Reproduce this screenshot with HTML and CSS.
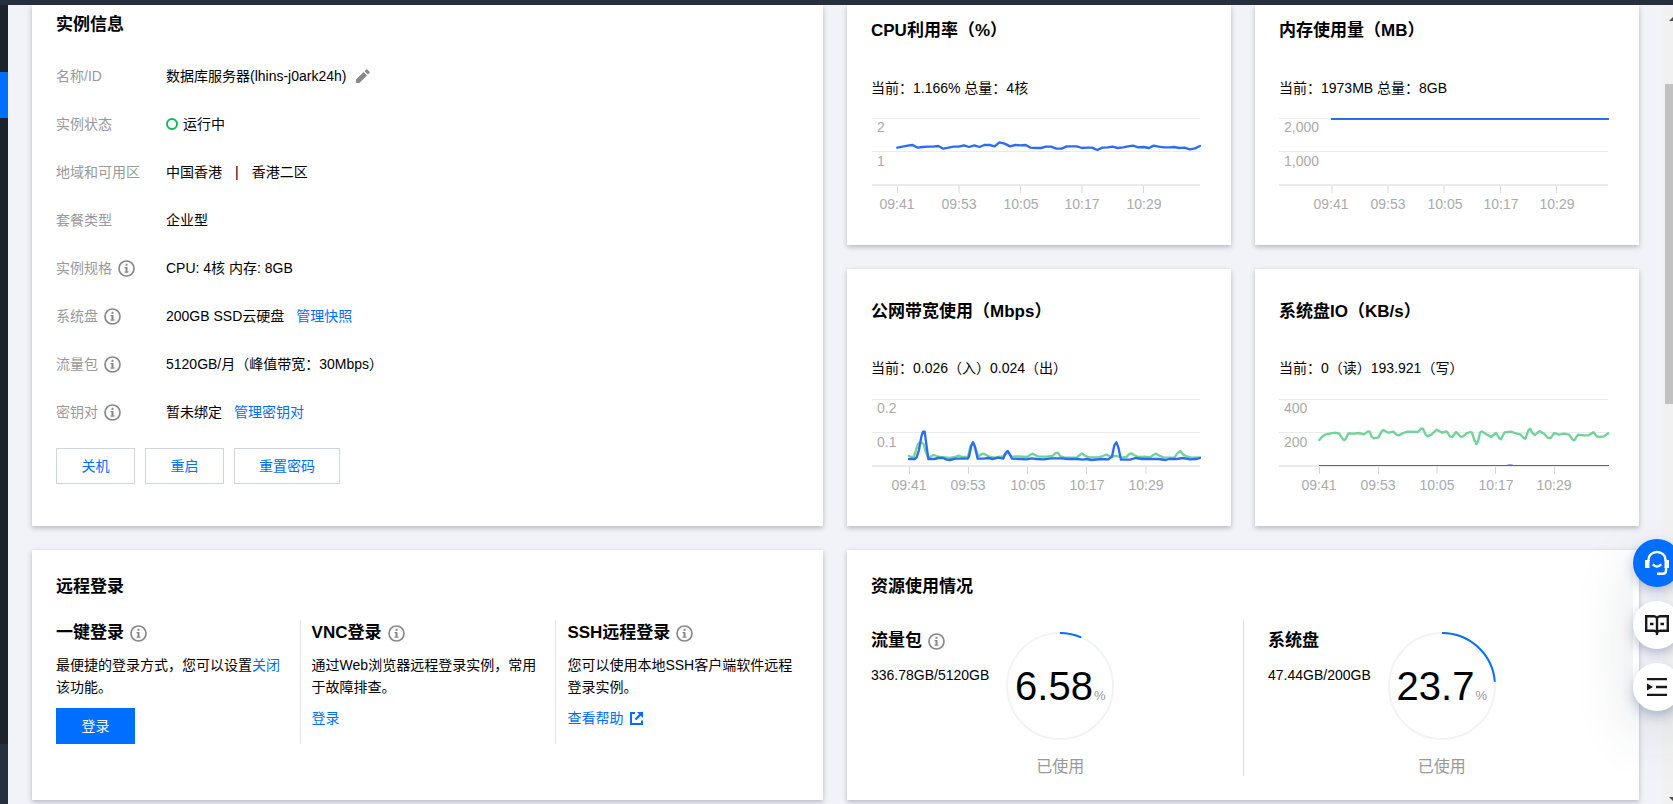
FILE: index.html
```html
<!DOCTYPE html>
<html lang="zh-CN">
<head>
<meta charset="utf-8">
<meta name="viewport" content="width=device-width, initial-scale=1">
<title>实例信息</title>
<link rel="stylesheet" href="styles.css">
</head>
<body>
<svg class="sprite" aria-hidden="true">
  <symbol id="info" viewBox="0 0 17 17">
    <circle cx="8.5" cy="8.5" r="7.5" fill="none" stroke="currentColor" stroke-width="1.7"/>
    <path d="M7.5 3.8h2v2h-2zM6.5 7h3v4.6h1v1.2h-4v-1.2h1V8.2h-1z" fill="currentColor"/>
  </symbol>
</svg>
<div class="topbar"></div>
<div class="shell">
  <nav class="rail" aria-label="导航"><span class="rail-active"></span><span class="rail-foot"></span></nav>
  <main class="content">
    <section class="card instance">
      <h2>实例信息</h2>
      <dl class="facts">
        <dt>名称/ID</dt>
        <dd>数据库服务器(lhins-j0ark24h)
          <button class="icon-btn" aria-label="编辑名称"><svg width="14" height="14" viewBox="0 0 14 14"><path d="M0 14v-3.4L7.6 3 11 6.4 3.4 14zM8.5 2.1 10.2.4q.5-.5 1 0l2.4 2.4q.5.5 0 1l-1.7 1.7z" fill="#888"/></svg></button></dd>
        <dt>实例状态</dt>
        <dd><span class="dot"></span>运行中</dd>
        <dt>地域和可用区</dt>
        <dd>中国香港<span class="bar">|</span>香港二区</dd>
        <dt>套餐类型</dt>
        <dd>企业型</dd>
        <dt>实例规格<svg class="info"><use href="#info"/></svg></dt>
        <dd>CPU: 4核 内存: 8GB</dd>
        <dt>系统盘<svg class="info"><use href="#info"/></svg></dt>
        <dd>200GB SSD云硬盘<a class="next" href="#">管理快照</a></dd>
        <dt>流量包<svg class="info"><use href="#info"/></svg></dt>
        <dd>5120GB/月（峰值带宽：30Mbps）</dd>
        <dt>密钥对<svg class="info"><use href="#info"/></svg></dt>
        <dd>暂未绑定<a class="next" href="#">管理密钥对</a></dd>
      </dl>
      <div class="actions">
        <button class="btn">关机</button>
        <button class="btn">重启</button>
        <button class="btn">重置密码</button>
      </div>
    </section>

    <div class="charts">
      <section class="card chart first">
        <h2>CPU利用率（%）</h2>
        <p>当前：1.166% 总量：4核</p>
        <svg class="plot" viewBox="0 0 336 104" role="img" aria-label="CPU利用率">
          <path class="grid" d="M1 4.5h328M1 37.5h328"/>
          <path class="axis" d="M1 71h328M26.5 72v7M88 72v7M149.500 72v7M211 72v7M272.500 72v7"/>
          <text x="6" y="18">2</text><text x="6" y="52">1</text>
          <g class="mid"><text x="26" y="95">09:41</text><text x="88" y="95">09:53</text><text x="150" y="95">10:05</text><text x="211" y="95">10:17</text><text x="273" y="95">10:29</text></g>
          <g transform="translate(-41 -114) scale(.33333)">
            <polyline class="line blue" points="202,443 217,440 233,437 248,435 263,443 279,441 294,440 309,440 325,438 340,446 356,443 371,440 386,440 402,436 417,441 433,436 448,441 463,435 479,435 494,439 508,427 524,431 540,439 556,435 571,436 587,435 602,443 617,444 633,444 648,440 663,440 679,446 695,446 710,439 725,439 740,439 756,444 771,443 786,443 802,450 817,443 833,442 848,440 863,444 879,442 894,439 909,437 925,442 940,441 957,444 971,437 986,440 1002,442 1017,442 1033,441 1048,444 1064,443 1079,448 1095,445 1110,438"/>
          </g>
        </svg>
      </section>
      <section class="card chart first">
        <h2>内存使用量（MB）</h2>
        <p>当前：1973MB 总量：8GB</p>
        <svg class="plot" viewBox="0 0 336 104" role="img" aria-label="内存使用量">
          <path class="grid" d="M0 4.5h329M0 37.5h329"/>
          <path class="axis" d="M0 71h329M53 72v7M109 72v7M165 72v7M221.500 72v7M277.500 72v7"/>
          <text x="5" y="18">2,000</text><text x="5" y="52">1,000</text>
          <g class="mid"><text x="52" y="95">09:41</text><text x="109" y="95">09:53</text><text x="166" y="95">10:05</text><text x="222" y="95">10:17</text><text x="278" y="95">10:29</text></g>
          <path d="M52 5h278" fill="none" stroke="#2b6cf5" stroke-width="2"/>
        </svg>
      </section>
      <section class="card chart">
        <h2>公网带宽使用（Mbps）</h2>
        <p>当前：0.026（入）0.024（出）</p>
        <svg class="plot" viewBox="0 0 336 104" role="img" aria-label="公网带宽使用">
          <path class="grid" d="M1 4.5h328M1 37.5h328"/>
          <path class="axis" d="M1 71h328M38.500 72v7M97.500 72v7M156.500 72v7M215.500 72v7M275 72v7"/>
          <text x="6" y="18">0.2</text><text x="6" y="52">0.1</text>
          <g class="mid"><text x="38" y="95">09:41</text><text x="97" y="95">09:53</text><text x="157" y="95">10:05</text><text x="216" y="95">10:17</text><text x="275" y="95">10:29</text></g>
          <g transform="translate(-41 -135) scale(.33333)">
            <polyline class="line green" points="237,588 244,591 252,590 258,570 264,552 268,548 275,548 281,552 287,575 295,594 303,589 311,585 320,588 330,591 345,592 360,594 375,591 386,587 396,591 414,590 421,560 429,547 437,565 445,590 452,584 459,581 467,584 480,591 495,593 508,590 520,589 533,575 545,590 565,589 592,591 600,585 607,581 615,585 625,590 650,590 668,588 675,580 684,578 691,589 705,593 740,593 749,585 756,580 764,587 778,592 805,592 818,588 829,584 840,589 860,588 875,593 890,591 896,583 904,580 912,585 925,591 945,590 960,592 970,585 978,581 986,586 1000,592 1033,593 1042,580 1051,573 1060,584 1070,589 1085,593 1110,592"/>
            <polyline class="line blue" points="237,597 254,597 260,592 267,570 274,530 279,515 284,515 288,545 295,597 312,597 325,594 340,594 350,599 360,600 376,596 413,596 417,590 424,557 429,547 434,558 443,596 460,596 475,594 488,597 505,593 520,596 526,580 533,573 540,584 546,596 570,597 590,598 605,595 620,597 640,598 665,595 695,595 715,597 740,597 760,599 770,597 785,600 815,597 835,598 846,590 853,556 859,547 865,562 873,599 900,599 918,594 935,597 985,597 1007,600 1017,597 1040,597 1059,594 1080,598 1100,597 1110,594"/>
          </g>
        </svg>
      </section>
      <section class="card chart">
        <h2>系统盘IO（KB/s）</h2>
        <p>当前：0（读）193.921（写）</p>
        <svg class="plot" viewBox="0 0 336 104" role="img" aria-label="系统盘IO">
          <path class="grid" d="M0 4.500h329M0 37.500h329"/>
          <path class="axis" d="M0 71h329M40.500 72v7M99.500 72v7M158 72v7M216.500 72v7M275.500 72v7"/>
          <text x="5" y="18">400</text><text x="5" y="52">200</text>
          <g class="mid"><text x="40" y="95">09:41</text><text x="99" y="95">09:53</text><text x="158" y="95">10:05</text><text x="217" y="95">10:17</text><text x="275" y="95">10:29</text></g>
          <g transform="translate(-39 -135) scale(.33333)">
            <polyline class="line green" points="238,540 246,530 255,524 270,521 284,518 298,521 306,534 312,541 317,537 325,520 342,521 357,519 372,523 384,514 389,515 395,530 401,535 415,532 425,514 430,510 445,518 460,515 468,523 476,526 490,519 502,515 534,516 542,507 549,506 556,522 562,529 575,523 590,509 607,518 620,514 630,529 637,531 648,516 655,522 662,530 668,530 680,520 690,516 696,518 703,540 709,552 714,545 720,518 725,514 738,522 753,531 768,519 778,535 783,538 794,517 812,515 830,521 841,523 850,533 856,536 865,512 870,506 878,520 885,525 898,513 912,521 924,534 932,534 943,519 957,524 972,521 987,524 997,538 1003,541 1014,524 1032,526 1046,526 1060,517 1070,529 1078,531 1092,529 1105,520"/>
          </g>
          <path d="M40 70.500h290" fill="none" stroke="#2b6cf5"/>
          <path d="M228 70l3-.6 3 .6" fill="none" stroke="#2b6cf5" stroke-width=".6"/>
        </svg>
      </section>
    </div>

    <section class="card lower">
      <h2>远程登录</h2>
      <div class="logins">
        <div>
          <h3>一键登录<svg class="info"><use href="#info"/></svg></h3>
          <p>最便捷的登录方式，您可以设置<a href="#">关闭</a>该功能。</p>
          <button class="btn primary">登录</button>
        </div>
        <div>
          <h3>VNC登录<svg class="info"><use href="#info"/></svg></h3>
          <p>通过Web浏览器远程登录实例，常用于故障排查。</p>
          <a class="go" href="#">登录</a>
        </div>
        <div>
          <h3>SSH远程登录<svg class="info"><use href="#info"/></svg></h3>
          <p>您可以使用本地SSH客户端软件远程登录实例。</p>
          <a class="go" href="#">查看帮助<svg width="13" height="13" viewBox="0 0 13 13" fill="none" stroke="currentColor"><path d="M5 1H1v11h11V8.500" stroke-width="2"/><path d="M11 2 5.500 7.500" stroke-width="2.400"/><path d="M7 0h6v6z" fill="currentColor" stroke="none"/></svg></a>
        </div>
      </div>
    </section>

    <section class="card lower">
      <h2>资源使用情况</h2>
      <div class="usage">
        <div>
          <div class="amount">
            <h3>流量包<svg class="info"><use href="#info"/></svg></h3>
            <span>336.78GB/5120GB</span>
          </div>
          <figure>
            <div class="ring">
              <svg viewBox="0 0 108 108"><circle cx="54" cy="54" r="53"/><circle class="used" cx="54" cy="54" r="53" pathLength="100" stroke-dasharray="6.58 100"/></svg>
              <strong>6.58</strong><small>%</small>
            </div>
            <figcaption>已使用</figcaption>
          </figure>
        </div>
        <div>
          <div class="amount">
            <h3>系统盘</h3>
            <span>47.44GB/200GB</span>
          </div>
          <figure>
            <div class="ring">
              <svg viewBox="0 0 108 108"><circle cx="54" cy="54" r="53"/><circle class="used" cx="54" cy="54" r="53" pathLength="100" stroke-dasharray="23.7 100"/></svg>
              <strong>23.7</strong><small>%</small>
            </div>
            <figcaption>已使用</figcaption>
          </figure>
        </div>
      </div>
    </section>
  </main>
  <div class="scroll" aria-hidden="true">
    <svg class="arrow" width="4" height="4" viewBox="0 0 4 4"><path d="M0 4 4 0v4z" fill="#505050"/></svg>
    <span class="thumb"></span>
    <svg class="arrow down" width="4" height="4" viewBox="0 0 4 4"><path d="M0 0h4v4z" fill="#505050"/></svg>
  </div>
</div>
<aside class="float">
  <button class="service" aria-label="在线客服"><svg width="26" height="26" viewBox="0 0 26 26" fill="none" stroke="#fff" stroke-width="2.400"><path d="M4.500 11V9.500a8.500 7.500 0 0 1 17 0V11"/><path d="M1 10h4.500v8H1zM20.500 10H25v8h-4.500z" fill="#fff" stroke="none"/><path d="M22 17v3.500q0 3.300-3.300 3.300H13M8.800 14.200q4.200 4.800 8.400 0"/></svg></button>
  <button aria-label="文档"><svg width="26" height="22" viewBox="0 0 26 22" fill="none" stroke="#181818" stroke-width="2.400"><path d="M13 4.200q-1-2-3-2H2.200v14.600H10q2 0 3 2 1-2 3-2h7.800V2.200H16q-2 0-3 2zM13 4v17M6 10h3.500M16.500 10H20"/></svg></button>
  <button aria-label="展开"><svg width="20" height="18" viewBox="0 0 20 18"><path d="M0 1.200h20M9 9h11M0 16.800h20" stroke="#181818" stroke-width="2.300"/><path d="M0 5.500 6 9l-6 3.500z" fill="#181818"/></svg></button>
</aside>
</body>
</html>
```
FILE: styles.css
```css
* { box-sizing: border-box; }
html, body { height: 100%; }
body {
  margin: 0;
  display: flex;
  flex-direction: column;
  overflow: hidden;
  background: #f2f3f8;
  color: #000;
  font: 14px/22px "Liberation Sans", "Noto Sans CJK SC", sans-serif;
}
h2, h3, p, dl, dd, figure { margin: 0; }
h2, h3 { font-size: 17px; line-height: 24px; }
a { color: #006eff; text-decoration: none; }
button { font: inherit; cursor: pointer; }
.sprite { position: absolute; width: 0; height: 0; }

.topbar { height: 5px; flex: none; background: #262f3e; position: relative; z-index: 1; }
.shell { display: flex; flex: 1; min-height: 0; }
.rail { width: 8px; flex: none; background: #1e222d; display: flex; flex-direction: column; padding-top: 67px; }
.rail-active { height: 46px; background: #006eff; }
.rail-foot { height: 60px; margin-top: auto; background: #262f3e; }

.content {
  flex: 1;
  min-width: 0;
  display: grid;
  grid-template-columns: 791fr 792fr;
  grid-template-rows: auto auto;
  align-content: start;
  gap: 24px;
  padding: 0 24px;
  overflow: hidden;
}
.card { background: #fff; box-shadow: 0 2px 5px rgba(54, 58, 80, .32); min-width: 0; }

.instance { padding: 8px 24px 42px; }
.facts { display: grid; grid-template-columns: 110px 1fr; grid-auto-rows: 48px; align-items: center; margin-top: 15px; }
.facts dt { color: #999; }
.facts dt, .facts dd { display: flex; align-items: center; white-space: nowrap; }
.info { width: 17px; height: 17px; margin-left: 6px; color: #888; flex: none; }
.icon-btn { border: 0; padding: 0; margin-left: 10px; background: none; display: flex; }
.dot { width: 12px; height: 12px; border: 2px solid #0abf5b; border-radius: 50%; margin-right: 5px; }
.bar { margin: 0 13px; }
.next { margin-left: 12px; }
.actions { display: flex; gap: 10px; margin-top: 12px; }
.btn { height: 36px; min-width: 79px; padding: 0 24px; border: 1px solid #cfd5de; background: #fff; color: #006eff; }
.primary { background: #006eff; border-color: #006eff; color: #fff; }

.charts { display: grid; grid-template-columns: 1fr 1fr; grid-template-rows: auto 1fr; gap: 24px; }
.chart { padding: 31px 24px 24px; }
.chart p { margin: 33px 0 16px; }
.chart.first { padding: 14px 24px 27px; }
.chart.first p { margin: 34px 0 15px; }
.plot { display: block; width: 100%; height: auto; }
.plot text { font-size: 14px; fill: #aaa; }
.mid { text-anchor: middle; }
.grid { stroke: #ebebeb; }
.axis { fill: none; stroke: #d6d6d6; stroke-width: 1; }
.line { fill: none; stroke-width: 7; stroke-linejoin: round; stroke-linecap: round; }
.blue { stroke: #2b6cf5; }
.green { stroke: #6fd39a; }

.lower { padding: 25px 24px 24px; min-height: 250px; }
.logins { display: grid; grid-template-columns: 20fr 21fr 20fr; margin-top: 21px; min-height: 124px; }
.logins > div { padding-right: 11px; }
.logins > div:last-child { padding-right: 0; }
.logins > div + div { border-left: 1px solid #e5e7ec; padding-left: 11px; }
.logins h3, .amount h3 { display: flex; align-items: center; }
.logins h3 { line-height: 26px; }
.logins p { margin: 8px 0 10px; line-height: 22px; }
.logins .btn { display: block; }
.go { display: flex; align-items: center; gap: 7px; line-height: 20px; }

.usage { display: grid; grid-template-columns: 1fr 1fr; margin-top: 21px; }
.usage > div { display: flex; gap: 17px; height: 156px; padding-top: 9px; }
.usage > div + div { border-left: 1px solid #ddd; padding-left: 24px; }
.amount span { display: block; margin-top: 11px; }
.ring { position: relative; width: 108px; height: 108px; margin-top: 3px; display: flex; align-items: baseline; justify-content: center; line-height: 108px; }
.ring svg { position: absolute; inset: 0; transform: rotate(-90deg); }
.ring circle { fill: none; stroke: #f2f3f8; stroke-width: 2; }
.ring .used { stroke: #006eff; }
.ring strong { font-size: 40px; font-weight: 400; }
.ring small { font-size: 13px; color: #999; margin-left: 1px; }
figcaption { text-align: center; font-size: 16px; line-height: 24px; margin-top: 15px; color: #999; }

.scroll { width: 10px; flex: none; background: #f1f1f1; display: flex; flex-direction: column; align-items: flex-end; padding: 12px 0 3px; }
.thumb { width: 8px; height: 320px; margin-top: 63px; background: #c1c1c1; }
.arrow.down { margin-top: auto; }

.float { position: fixed; right: -8px; bottom: 93px; display: flex; flex-direction: column; gap: 14px; border-radius: 24px; box-shadow: 0 24px 60px rgba(40, 60, 80, .14); z-index: 2; }
.float button { width: 48px; height: 48px; border: 0; border-radius: 50%; padding: 0; background: #fff; display: flex; align-items: center; justify-content: center; box-shadow: 0 5px 12px rgba(40, 60, 110, .3); }
.float .service { background: #006eff; }
```
